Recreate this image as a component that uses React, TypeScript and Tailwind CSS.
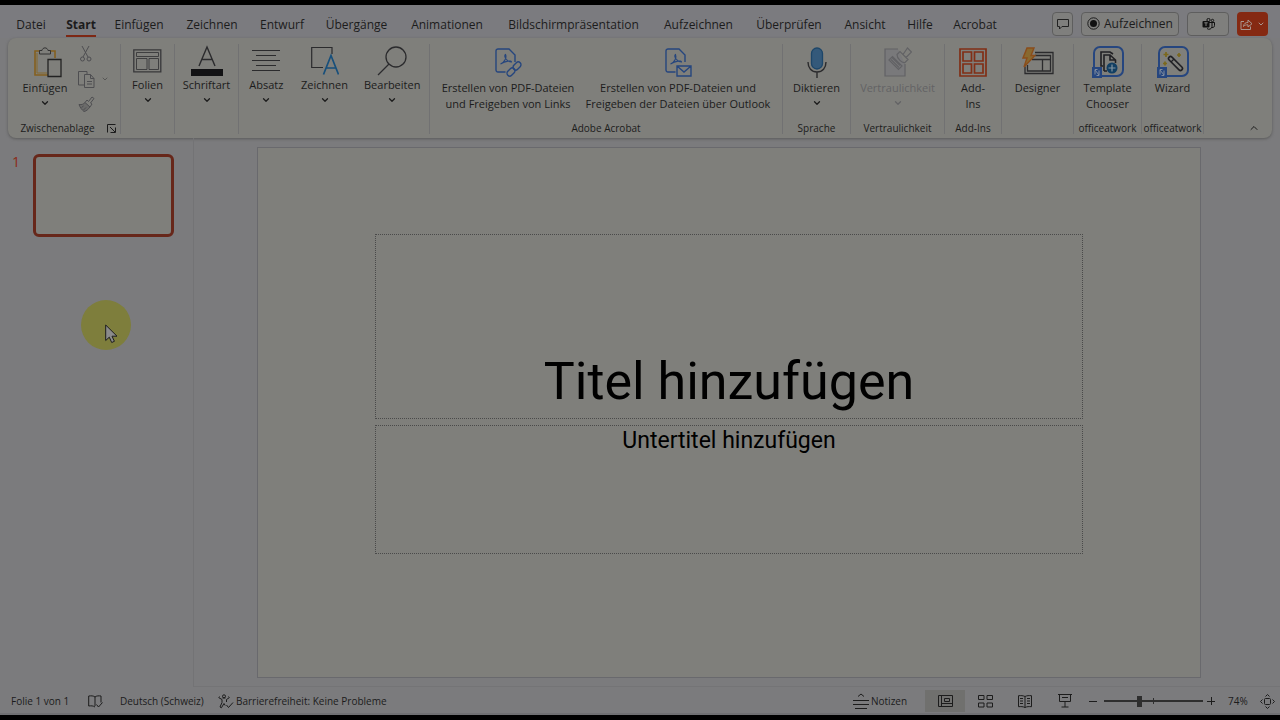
import { useState, type ReactNode } from 'react';
import { ChevronDown, ChevronUp } from 'lucide-react';

const tabs = [
  { label: 'Datei', width: 'w-[30px]' },
  { label: 'Start', width: 'w-[30px]' },
  { label: 'Einfügen', width: 'w-[46px]' },
  { label: 'Zeichnen', width: 'w-[60px]' },
  { label: 'Entwurf', width: 'w-[40px]' },
  { label: 'Übergänge', width: 'w-[69px]' },
  { label: 'Animationen', width: 'w-[72px]' },
  { label: 'Bildschirmpräsentation', width: 'w-[141px]' },
  { label: 'Aufzeichnen', width: 'w-[69px]' },
  { label: 'Überprüfen', width: 'w-[72px]' },
  { label: 'Ansicht', width: 'w-[40px]' },
  { label: 'Hilfe', width: 'w-[30px]' },
  { label: 'Acrobat', width: 'w-[40px]' }
];

export default function App() {
  return (
    <div className="flex min-h-screen flex-col overflow-hidden border-y-[5px] border-black bg-[#7b7b7d] font-['Open_Sans','Noto_Sans',sans-serif] text-[#1c1c1c]">
      <TabBar />
      <Ribbon />
      <main className="flex flex-1">
        <SlideList />
        <SlideCanvas />
      </main>
      <StatusBar />
    </div>
  );
}

function TabBar() {
  const [active, setActive] = useState('Start');

  return (
    <header className="flex h-[33px] items-center justify-between bg-[#7b7b7f] pr-3 pl-4">
      <nav className="flex gap-5 pt-2 text-[12px] leading-5">
        {tabs.map((tab) => (
          <button
            key={tab.label}
            onClick={() => setActive(tab.label)}
            className={`flex flex-col items-center whitespace-nowrap ${tab.width} ${active === tab.label ? 'font-bold' : ''}`}
          >
            {tab.label}
            <span className={active === tab.label ? 'h-0.5 w-full bg-[#7e2713]' : 'h-0.5 w-full'} />
          </button>
        ))}
      </nav>
      <div className="flex items-center gap-2 pt-1 text-[12px]">
        <button aria-label="Kommentare" className="flex h-6 w-[21px] items-center justify-center rounded border border-[#5e5e5e] bg-[#7f7f7d]">
          <svg width="12" height="12" viewBox="0 0 12 12" fill="none" stroke="#222" strokeWidth="1">
            <path d="M.5 1.5h11v7H5L2.5 11V8.500H.5z" />
          </svg>
        </button>
        <button className="flex h-6 w-[98px] items-center justify-center gap-1 rounded border border-[#5e5e5e] bg-[#7f7f7d] whitespace-nowrap">
          <svg width="13" height="13" viewBox="0 0 13 13" className="shrink-0">
            <circle cx="6.500" cy="6.500" r="5.700" fill="none" stroke="#1c1c1c" />
            <circle cx="6.500" cy="6.500" r="3.500" fill="#111" />
          </svg>
          Aufzeichnen
        </button>
        <button aria-label="Teams" className="flex h-6 w-[42px] items-center justify-center rounded border border-[#5e5e5e] bg-[#7f7f7d]">
          <svg width="13" height="12" viewBox="0 0 13 12">
            <circle cx="6.500" cy="2" r="1.600" fill="none" stroke="#111" />
            <circle cx="10.500" cy="2.500" r="1.200" fill="none" stroke="#111" />
            <path d="M7 4.500h3v4a3 3 0 0 1-5 2M10 4.500h2.500v3a2 2 0 0 1-2.500 2" fill="none" stroke="#111" />
            <rect x=".5" y="3" width="7" height="6.500" rx="1" fill="#111" />
            <path d="M2.300 4.800h3.400M4 4.800v3.200" stroke="#7f7f7d" />
          </svg>
        </button>
        <button aria-label="Freigeben" className="flex h-6 w-[31px] items-center justify-center gap-1 rounded bg-[#852912] text-[#a9968f]">
          <svg width="13" height="12" viewBox="0 0 13 12" fill="none" stroke="currentColor">
            <path d="M4 3.500H1v8h9.500V8.500" />
            <path d="M3.500 8.500c.3-3 2-4 4.500-4V2l4 3.700-4 3.300V6.800c-2 0-3.500.3-4.500 1.700z" />
          </svg>
          <ChevronDown size={8} strokeWidth={3} />
        </button>
      </div>
    </header>
  );
}

function Ribbon() {
  return (
    <section aria-label="Menüband" className="mx-2 flex h-[100px] rounded-lg bg-[#7f7f7b] text-[11px] leading-4 shadow-[0_1px_3px_#5a5a5a]">
      <Group label="Zwischenablage" width="w-[113px]" launcher>
        <RibbonButton label="Einfügen" tall arrow width="w-[58px]"><PasteIcon /></RibbonButton>
        <div className="flex w-[38px] flex-col gap-[5px] pl-1 opacity-60">
          <button aria-label="Ausschneiden" className="flex h-5 items-center pl-0.5"><CutIcon /></button>
          <button aria-label="Kopieren" className="flex h-5 items-center gap-1.5"><CopyIcon /><ChevronDown size={8} className="shrink-0" /></button>
          <button aria-label="Format übertragen" className="flex h-5 items-center"><BrushIcon /></button>
        </div>
      </Group>
      <Group width="w-[54px]">
        <RibbonButton label="Folien" arrow><SlidesIcon /></RibbonButton>
      </Group>
      <Group width="w-[64px]">
        <RibbonButton label="Schriftart" arrow><FontIcon /></RibbonButton>
      </Group>
      <Group width="w-[191px]">
        <RibbonButton label="Absatz" arrow width="w-[55px]"><ParagraphIcon /></RibbonButton>
        <RibbonButton label="Zeichnen" arrow width="w-[62px]"><DrawIcon /></RibbonButton>
        <RibbonButton label="Bearbeiten" arrow width="w-[74px]"><SearchIcon /></RibbonButton>
      </Group>
      <Group label="Adobe Acrobat" width="w-[353px]">
        <RibbonButton label={<>Erstellen von PDF-Dateien<br />und Freigeben von Links</>} tall width="w-[144px]"><PdfIcon kind="link" /></RibbonButton>
        <RibbonButton label={<>Erstellen von PDF-Dateien und<br />Freigeben der Dateien über Outlook</>} tall width="w-[196px]"><PdfIcon kind="mail" /></RibbonButton>
      </Group>
      <Group label="Sprache" width="w-[68px]">
        <RibbonButton label="Diktieren" tall arrow><MicIcon /></RibbonButton>
      </Group>
      <Group label="Vertraulichkeit" width="w-[94px]">
        <RibbonButton label="Vertraulichkeit" tall arrow disabled><SensitivityIcon /></RibbonButton>
      </Group>
      <Group label="Add-Ins" width="w-[57px]">
        <RibbonButton label={<>Add-<br />Ins</>} tall><AddInsIcon /></RibbonButton>
      </Group>
      <Group width="w-[72px]">
        <RibbonButton label="Designer" tall><DesignerIcon /></RibbonButton>
      </Group>
      <Group label="officeatwork" width="w-[68px]">
        <RibbonButton label={<>Template<br />Chooser</>} tall><TemplateIcon /></RibbonButton>
      </Group>
      <Group label="officeatwork" width="w-[62px]">
        <RibbonButton label="Wizard" tall><WizardIcon /></RibbonButton>
      </Group>
      <button aria-label="Menüband reduzieren" className="mt-auto mr-3 mb-1 ml-auto">
        <ChevronUp size={12} strokeWidth={2} />
      </button>
    </section>
  );
}

function Group({ label, width, launcher, children }: { label?: string; width: string; launcher?: boolean; children: ReactNode }) {
  return (
    <div className={`mt-1.5 mb-1 flex shrink-0 flex-col border-r border-[#717172] ${width}`}>
      <div className="flex flex-1 justify-center">{children}</div>
      {label && (
        <div className={`flex h-3 items-center justify-center gap-3 text-[10px] whitespace-nowrap ${launcher ? 'pl-2' : ''}`}>
          {label}
          {launcher && (
            <button aria-label="Zwischenablage öffnen">
              <svg width="9" height="9" viewBox="0 0 9 9" fill="none" stroke="#1c1c1c">
                <path d="M.5 8.500V.5h8M3 3l5 5M8.500 3.500v5h-5" />
              </svg>
            </button>
          )}
        </div>
      )}
    </div>
  );
}

function RibbonButton({
  label,
  tall,
  arrow,
  disabled,
  width = 'w-full',
  children
}: {
  label: ReactNode;
  tall?: boolean;
  arrow?: boolean;
  disabled?: boolean;
  width?: string;
  children: ReactNode;
}) {
  return (
    <button disabled={disabled} className={`flex flex-col items-center whitespace-nowrap ${width} ${disabled ? 'text-[#636365]' : ''}`}>
      <span className={`flex items-center justify-center ${tall ? 'h-9' : 'h-[33px]'}`}>{children}</span>
      <span>{label}</span>
      {arrow && <ChevronDown size={10} strokeWidth={3} className="mt-0.5" />}
    </button>
  );
}

function SlideList() {
  return (
    <aside className="relative flex w-[194px] shrink-0 gap-3.5 border-r border-[#737375] pt-4 pl-3">
      <span className="w-[7px] text-[14px] leading-4 text-[#8c2a18]">1</span>
      <button aria-label="Folie 1" className="h-[83px] w-[141px] rounded-md border-3 border-[#67271a] bg-[#7f7f7b]" />
      <div className="absolute top-[162px] left-[81px] size-[50px] rounded-full bg-[#7e7e3c]">
        <svg width="14" height="20" viewBox="0 0 14 20" className="absolute top-[24px] left-[24px]">
          <path d="M.7 1v15.500l3.600-3.300 2.400 5.300 2.700-1.200-2.400-5.100h5z" fill="#8b8b8b" stroke="#1c1c1c" />
        </svg>
      </div>
    </aside>
  );
}

function SlideCanvas() {
  return (
    <section className="flex-1 border-b border-[#747476] pt-[9px] pr-[79px] pb-2 pl-[63px]">
      <div className="flex aspect-video flex-col gap-1.5 border border-[#69696d] bg-[#7f7f7b] px-[117px] pt-[86px] font-[Roboto,sans-serif] text-black">
        <div className="flex h-[185px] items-end justify-center border border-dotted border-[#4a4a4a] pb-1">
          <h1 className="text-[52px] leading-[64px]">Titel hinzufügen</h1>
        </div>
        <div className="flex h-[129px] justify-center border border-dotted border-[#4a4a4a]">
          <p className="text-[23px] leading-[30px]">Untertitel hinzufügen</p>
        </div>
      </div>
    </section>
  );
}

function StatusBar() {
  const [zoom, setZoom] = useState(35);

  return (
    <footer className="flex h-7 items-center justify-between border-b-2 border-[#707073] pt-0.5 pl-[11px] text-[10px] whitespace-nowrap">
      <div className="flex items-center">
        <span className="w-[77px]">Folie 1 von 1</span>
        <button aria-label="Rechtschreibung" className="w-8">
          <svg width="15" height="13" viewBox="0 0 15 13" fill="none" stroke="#1c1c1c">
            <path d="M7 2v9M7 2C5.500.7 3 .7.700 1v10c2.500-.3 4.500-.3 6.300 1M7 2c1.500-1.300 4-1.300 6-1v6.500M8.500 9.500l2 2.500 4-4.500" />
          </svg>
        </button>
        <button className="w-[98px] text-left">Deutsch (Schweiz)</button>
        <button className="flex items-center gap-0.5">
          <svg width="16" height="15" viewBox="0 0 16 15" fill="none" stroke="#1c1c1c">
            <circle cx="6" cy="2.300" r="1.500" />
            <path d="M1.500 2.500l-.7 1.200L4 5.500v3l-2 4.500 1.400.8L6 9.500l1.200 2M10.500 2.500l.8 1.200L8.500 5.500V8M4.500 4h3M8.500 11l2 2.500 4.500-5" />
          </svg>
          Barrierefreiheit: Keine Probleme
        </button>
      </div>
      <div className="flex h-full items-center">
        <button className="flex w-[72px] items-center gap-0.5">
          <svg width="16" height="16" viewBox="0 0 16 16" fill="none" stroke="#1c1c1c">
            <path d="M5 3.500l3-2.500 3 2.500M0 7.500h16M0 11.500h16M2 15.500h12" />
          </svg>
          Notizen
        </button>
        <button aria-label="Normalansicht" className="flex h-[22px] w-10 items-center justify-center bg-[#70706e]">
          <svg width="15" height="13" viewBox="0 0 15 13" fill="none" stroke="#1c1c1c">
            <path d="M.5.5h14v11H.5zM3.500.5v11M3.500 8.500h11M6.500 3.500h5v3h-5z" />
          </svg>
        </button>
        <button aria-label="Foliensortierung" className="flex w-10 justify-center">
          <svg width="15" height="13" viewBox="0 0 15 13" fill="none" stroke="#1c1c1c">
            <path d="M.5.500h5.500v4H.500zM9 .500h5.500v4H9zM.500 8h5.500v4H.500zM9 8h5.500v4H9z" />
          </svg>
        </button>
        <button aria-label="Leseansicht" className="flex w-10 justify-center">
          <svg width="14" height="13" viewBox="0 0 14 13" fill="none" stroke="#1c1c1c">
            <path d="M7 1.500C5 .5 3 .5.500.7v11c2.500-.2 4.500-.2 6.500.8 2-1 4-1 6.500-.8V.7C11 .5 9 .5 7 1.500zM7 1.500v11M2 3.500h3M2 6h3M2 8.500h3M9 3.500h3M9 6h3M9 8.500h3" />
          </svg>
        </button>
        <button aria-label="Bildschirmpräsentation starten" className="flex w-10 justify-center">
          <svg width="14" height="14" viewBox="0 0 14 14" fill="none" stroke="#1c1c1c">
            <path d="M0 .5h14M1.500.5v7h11v-7M4 3.500h6M7 7.500v5.500M3.500 13h7" />
          </svg>
        </button>
        <button aria-label="Verkleinern" className="ml-1 flex w-[15px] justify-start">
          <svg width="8" height="8" viewBox="0 0 8 8" stroke="#1c1c1c"><path d="M0 4.500h8" /></svg>
        </button>
        <div className="relative flex items-center">
          <input
            type="range"
            aria-label="Zoom"
            value={zoom}
            onChange={(e) => setZoom(Number(e.target.value))}
            className="h-0.5 w-[99px] appearance-none bg-[#2e2e2e] [&::-webkit-slider-thumb]:h-[11px] [&::-webkit-slider-thumb]:w-[5px] [&::-webkit-slider-thumb]:appearance-none [&::-webkit-slider-thumb]:bg-[#2e2e2e]"
          />
          <span className="absolute left-[49px] h-1.5 w-px bg-[#2e2e2e]" />
        </div>
        <button aria-label="Vergrößern" className="flex w-[25px] justify-start pl-1">
          <svg width="8" height="8" viewBox="0 0 8 8" stroke="#1c1c1c"><path d="M0 4.500h8M4.500 0v8" /></svg>
        </button>
        <button className="w-[32px] text-left">{zoom + 39}%</button>
        <button aria-label="An Fenster anpassen" className="mr-[5px]">
          <svg width="15" height="15" viewBox="0 0 15 15" fill="none" stroke="#1c1c1c">
            <rect x="4.500" y="4.500" width="6" height="6" rx="1" />
            <path d="M5.500 2.500l2-2 2 2M5.500 12.500l2 2 2-2M2.500 5.500l-2 2 2 2M12.500 5.500l2 2-2 2" />
          </svg>
        </button>
      </div>
    </footer>
  );
}

function PasteIcon() {
  return (
    <svg width="28" height="32" viewBox="0 0 28 32" fill="none" className="ml-1.5">
      <path d="M6 5H1v24h13M16 5h5v7" stroke="#85601f" strokeWidth="1.600" />
      <path d="M3 7v20h10" stroke="#876b2e" strokeWidth="1" />
      <path d="M5.500 8V4.500h2.500C8.500 1 13.500 1 14 4.500h2.500V8z" fill="#7f7f7b" stroke="#333" />
      <path d="M14 13.500h13v17H14z" fill="#7f7f7b" stroke="#222" strokeWidth="1.300" />
    </svg>
  );
}

function CutIcon() {
  return (
    <svg width="12" height="16" viewBox="0 0 12 16" fill="none" stroke="#2e2e36">
      <path d="M2 0l6 11M9 0L3 11" />
      <circle cx="2.500" cy="13" r="2" />
      <circle cx="9" cy="13" r="2" />
    </svg>
  );
}

function CopyIcon() {
  return (
    <svg width="17" height="17" viewBox="0 0 17 17" fill="none" stroke="#2e2e36" className="shrink-0">
      <path d="M6 14H.500V.500H9V4M6.500 3.500h6l3.500 4v9H6.500zM12.500 3.500v4H16M9 10.500h5M9 13h5" />
    </svg>
  );
}

function BrushIcon() {
  return (
    <svg width="17" height="16" viewBox="0 0 17 16" fill="none" stroke="#2e2e36">
      <path d="M1 8.500c3 .5 4.500-.5 6-2l5 4.500c-2 2.500-3.500 4-6 4.500C4 14 2 11.500 1 8.500z" fill="#2e2e3666" />
      <path d="M7 6.500L9 4l1.500 1.500L14 1l2 1.500-3.500 4.500L14 8l-2 3M3.500 11.500l2-1.500M5.500 14l2.500-2.500" />
    </svg>
  );
}

function SlidesIcon() {
  return (
    <svg width="29" height="24" viewBox="0 0 29 24" fill="none" stroke="#38383a">
      <path d="M.8.8h27v22h-27z" strokeWidth="1.300" />
      <path d="M3.500 3.500h22v4h-22zM3.500 9.500h10.500v11H3.500zM16 9.500h9.500v11H16z" strokeWidth=".9" />
    </svg>
  );
}

function FontIcon() {
  return (
    <svg width="32" height="32" viewBox="0 0 32 32" fill="none">
      <path d="M8 21L16 2l8 19M11 14.500h10" stroke="#2b2b2d" strokeWidth="1.400" />
      <path d="M0 24h32v7H0z" fill="#121214" />
    </svg>
  );
}

function ParagraphIcon() {
  return (
    <svg width="28" height="24" viewBox="0 0 28 24" stroke="#2b2b2d" strokeWidth="1.200">
      <path d="M0 1.500h28M4 6.500h20M0 11.500h28M4 16.500h20M0 21.500h28" />
    </svg>
  );
}

function DrawIcon() {
  return (
    <svg width="28" height="30" viewBox="0 0 28 30" fill="none">
      <path d="M21 8V1.500H.700v20H12" stroke="#2b2b2d" strokeWidth="1.200" />
      <path d="M12.500 28.500L20 9.500l7.500 19M15 22h10" stroke="#174f7b" strokeWidth="1.700" />
    </svg>
  );
}

function SearchIcon() {
  return (
    <svg width="30" height="30" viewBox="0 0 30 30" fill="none" stroke="#2b2b2d" strokeWidth="1.300">
      <circle cx="19" cy="11" r="10" />
      <path d="M12 18L1 29" />
    </svg>
  );
}

function PdfIcon({ kind }: { kind: 'link' | 'mail' }) {
  return (
    <svg width="27" height="29" viewBox="0 0 27 29" fill="none" stroke="#26467e" strokeWidth="1.400">
      <path d="M10.500 24H3a2 2 0 0 1-2-2V3a2 2 0 0 1 2-2h11l6 6v7" />
      <path d="M5.500 16c4-1.500 6.500-6.500 5-9.500-2.500 2 2 7.500 6 7.500 0-2-6-1-11 2z" strokeWidth="1.100" />
      {kind === 'link' ? (
        <>
          <rect x="-4.500" y="-2.700" width="9" height="5.400" rx="2.700" transform="translate(16 24) rotate(-45)" />
          <rect x="-4.500" y="-2.700" width="9" height="5.400" rx="2.700" transform="translate(22 18) rotate(-45)" />
        </>
      ) : (
        <path d="M12 18h14v10H12zM12 18l7 6 7-6" />
      )}
    </svg>
  );
}

function MicIcon() {
  return (
    <svg width="20" height="31" viewBox="0 0 20 31" fill="none">
      <rect x="4.500" y="1" width="11" height="21" rx="5.500" fill="#34597a" stroke="#1d4669" strokeWidth="1.300" />
      <path d="M1 15c0 6 3.500 10 9 10s9-4 9-10M10 25v6" stroke="#2b2b2d" strokeWidth="1.400" />
    </svg>
  );
}

function SensitivityIcon() {
  return (
    <svg width="28" height="30" viewBox="0 0 28 30" fill="none" stroke="#626265" strokeWidth="1.200">
      <path d="M14 2H1v27h20V17" fill="#79797b" />
      <path d="M5 13l3.500-3.500 9.500 9.500-3.500 3.500zM7 12.500l8 8M8 10.500l8 8" />
      <path d="M13 7.500l3-3 8 8-3 3c-3 1-8-4-8-8zM19 7.500L23.500 1l4 4-5.500 5.500" />
    </svg>
  );
}

function AddInsIcon() {
  return (
    <svg width="28" height="29" viewBox="0 0 28 29" fill="none" stroke="#812f16" strokeWidth="1.700">
      <path d="M1 1h26v27H1zM4 4h8.500v9H4zM15.500 4H24v9h-8.500zM4 16h8.500v9H4zM15.500 16H24v9h-8.500z" />
    </svg>
  );
}

function DesignerIcon() {
  return (
    <svg width="32" height="30" viewBox="0 0 32 30" fill="none">
      <path d="M13 5.500h18v21H3v-7M13 8.500h15.500v4H10M5.500 18v6H28.500v-11.500M20.500 12.500V24" stroke="#2b2b2d" strokeWidth="1.300" />
      <path d="M5 1h7L9 8.500h4L2 20l3-9H1z" fill="#88692f" stroke="#8a4d1b" strokeWidth="1.400" />
    </svg>
  );
}

function BadgeFrame({ children }: { children: ReactNode }) {
  return (
    <svg width="32" height="32" viewBox="0 0 32 32" fill="none">
      <rect x="2" y="1" width="29" height="29" rx="6" stroke="#26467f" strokeWidth="2" />
      {children}
      <path d="M0 21h10v11H0z" fill="#26467f" />
      <path d="M3 28.500v-5h2.500M4.500 29.500H7v-5M3 24l4 5" stroke="#7f8b9e" />
    </svg>
  );
}

function TemplateIcon() {
  return (
    <BadgeFrame>
      <path d="M11 20H9V6h9l3 2M12 25V9h6l5.500 5v3M18 9v5h5.500M12 25h3" stroke="#202024" strokeWidth="1.600" />
      <circle cx="20" cy="22" r="5.500" fill="#123f63" />
      <path d="M16.500 22h7M20 18.500v7" stroke="#8294a0" strokeWidth="1.200" />
    </BadgeFrame>
  );
}

function WizardIcon() {
  return (
    <BadgeFrame>
      <rect x="-9" y="-2" width="18" height="4" rx="2" transform="translate(18.500 17.500) rotate(45)" stroke="#202024" strokeWidth="1.600" />
      <path d="M14 16l3-3" stroke="#202024" strokeWidth="1.300" />
      <path d="M9 6v5M6.500 8.500h5M22 7v4M20 9h4M8 15.500v4M6 17.500h4" stroke="#7c691c" strokeWidth="1.700" />
    </BadgeFrame>
  );
}
